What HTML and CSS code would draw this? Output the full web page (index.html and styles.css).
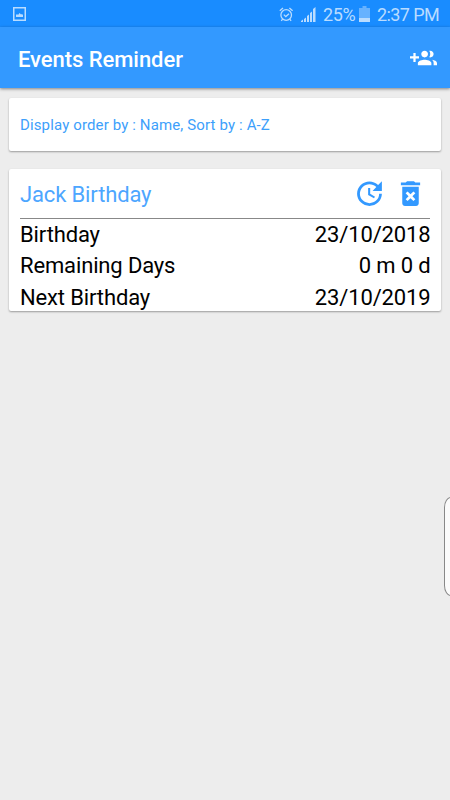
FILE: index.html
```html
<!DOCTYPE html>
<html lang="en">
<head>
<meta charset="utf-8">
<title>Events Reminder</title>
<link rel="stylesheet" href="styles.css">
</head>
<body>
<div class="status">
  <svg class="pic" width="13" height="14" viewBox="0 0 13 14"><rect x=".75" y=".75" width="11.5" height="12.5" fill="none" stroke="currentColor" stroke-width="1.5"/><path d="M3 10V8l1-1 1 1 1.6-2 1.4 1.5L9 7l1 1v2z" fill="currentColor"/></svg>
  <svg class="alarm" width="15" height="15" viewBox="0 0 15 15" fill="none" stroke="currentColor" stroke-width="1.3"><circle cx="7.2" cy="8" r="5.3"/><path d="M.8 3.8 4 1M10.4 1l3.2 2.8M3.6 12.2l-1.3 1.6M10.8 12.2l1.3 1.6M4.8 7.6l2 2 3.2-2.8"/></svg>
  <svg class="signal" width="15" height="15" viewBox="0 0 15 15" fill="currentColor"><path d="M0 14l2-1.5V15H0zM3 12l2-1.5V15H3zM6 9l2-1.5V15H6zM9 6l2-1.5V15H9zM12 2l2.5-2v15H12z"/></svg>
  <span class="percent">25%</span>
  <svg class="battery" width="11" height="16" viewBox="0 0 11 16" fill="currentColor"><path opacity=".48" d="M3.5 0h4v2H11v10H0V2h3.5z"/><path d="M0 12h11v4H0z"/></svg>
  <span class="time">2:37 PM</span>
</div>
<header class="appbar">
  <h1>Events Reminder</h1>
  <svg width="27" height="27" viewBox="0 0 24 24" fill="currentColor"><path d="M8 10H5V7H3v3H0v2h3v3h2v-3h3v-2zm10 1c1.66 0 2.99-1.34 2.99-3S19.66 5 18 5c-.32 0-.63.05-.91.14.57.81.9 1.79.9 2.86s-.34 2.04-.9 2.86c.28.09.59.14.91.14zm-5 0c1.66 0 2.99-1.34 2.99-3S14.66 5 13 5c-1.66 0-3 1.34-3 3s1.34 3 3 3zm6.62 2.16c.83.73 1.38 1.66 1.38 2.84v2h3v-2c0-1.54-2.37-2.49-4.38-2.84zM13 13c-2 0-6 1-6 3v2h12v-2c0-2-4-3-6-3z"/></svg>
</header>
<main>
  <section class="card order">Display order by : Name, Sort by : A-Z</section>
  <section class="card event">
    <div class="head">
      <h2>Jack Birthday</h2>
      <svg class="update" width="33" height="33" viewBox="0 0 24 24" fill="currentColor"><path d="M21 10.12h-6.78l2.74-2.82c-2.73-2.7-7.15-2.8-9.88-.1-2.73 2.71-2.73 7.08 0 9.79s7.15 2.71 9.88 0C18.32 15.65 19 14.08 19 12.1h2c0 1.98-.88 4.55-2.64 6.29-3.51 3.48-9.21 3.48-12.72 0-3.5-3.47-3.53-9.11-.02-12.58s9.14-3.47 12.65 0L21 3v7.12zM12.5 8v4.25l3.5 2.08-.72 1.21L11 13V8h1.5z"/></svg>
      <svg class="delete" width="33" height="33" viewBox="0 0 24 24" fill="currentColor"><path d="M6 19c0 1.1.9 2 2 2h8c1.1 0 2-.9 2-2V7H6v12zm2.46-7.12l1.41-1.41L12 12.59l2.12-2.12 1.41 1.41L13.41 14l2.12 2.12-1.41 1.41L12 15.41l-2.12 2.12-1.41-1.41L10.59 14l-2.13-2.12zM15.5 4l-1-1h-5l-1 1H5v2h14V4z"/></svg>
    </div>
    <div class="row"><span>Birthday</span><span>23/10/2018</span></div>
    <div class="row"><span>Remaining Days</span><span>0 m 0 d</span></div>
    <div class="row"><span>Next Birthday</span><span>23/10/2019</span></div>
  </section>
</main>
<div class="edge"></div>
</body>
</html>
```
FILE: styles.css
```css
* { box-sizing: border-box; }
body {
  margin: 0;
  height: 800px;
  overflow: hidden;
  position: relative;
  background: #ededed;
  font-family: Roboto, sans-serif;
  color: #000;
}
svg { display: block; flex: none; }
h1, h2 { margin: 0; }
.status {
  display: flex;
  height: 27px;
  padding: 0 11px 0 13px;
  background: #198cff;
  color: #b9dcff;
  font-size: 18px;
  line-height: 30px;
  white-space: nowrap;
}
.pic { margin: 7px auto 0 0; }
.alarm { margin: 7px 7px 0 0; }
.signal { margin: 7px 7px 0 0; }
.battery { margin: 6px 7px 0 3px; }
.percent { width: 33px; letter-spacing: -.4px; }
.time { width: 62px; letter-spacing: -.6px; }
.appbar {
  display: flex;
  align-items: center;
  justify-content: space-between;
  height: 61px;
  padding: 0 13px 0 18px;
  background: #3399ff;
  color: #fff;
  box-shadow: 0 1px 3px rgba(0, 0, 0, .45);
}
.appbar h1 { font-size: 22px; font-weight: 500; line-height: 26px; letter-spacing: -.05px; padding-top: 4px; }
.appbar svg { margin-top: 1px; }
main { padding: 10px 9px 0; }
.card {
  background: #fff;
  border-radius: 2px;
  box-shadow: 0 1px 2px rgba(0, 0, 0, .35);
}
.order {
  height: 53px;
  padding-left: 11px;
  color: #3da0fb;
  font-size: 15px;
  letter-spacing: .13px;
  line-height: 55px;
}
.event {
  height: 142px;
  margin-top: 18px;
  padding: 0 11px;
  font-size: 22px;
  letter-spacing: -.14px;
}
.head {
  display: flex;
  height: 50px;
  padding-top: 8px;
  border-bottom: 1px solid #888;
  color: #3399ff;
}
.head h2 { flex: 1; font-size: 22px; font-weight: 400; line-height: 35px; color: #4da6ff; }
.update { margin-right: 8px; }
.delete { margin-right: 3.5px; }
.row { display: flex; justify-content: space-between; height: 31.3px; line-height: 31.4px; }
.row span:last-child { margin-right: -.5px; }
.edge {
  position: absolute;
  right: -8px;
  top: 497px;
  width: 14px;
  height: 99px;
  border: 1px solid #888;
  border-radius: 8px / 12px;
  background: #fbfbfb;
}
```
